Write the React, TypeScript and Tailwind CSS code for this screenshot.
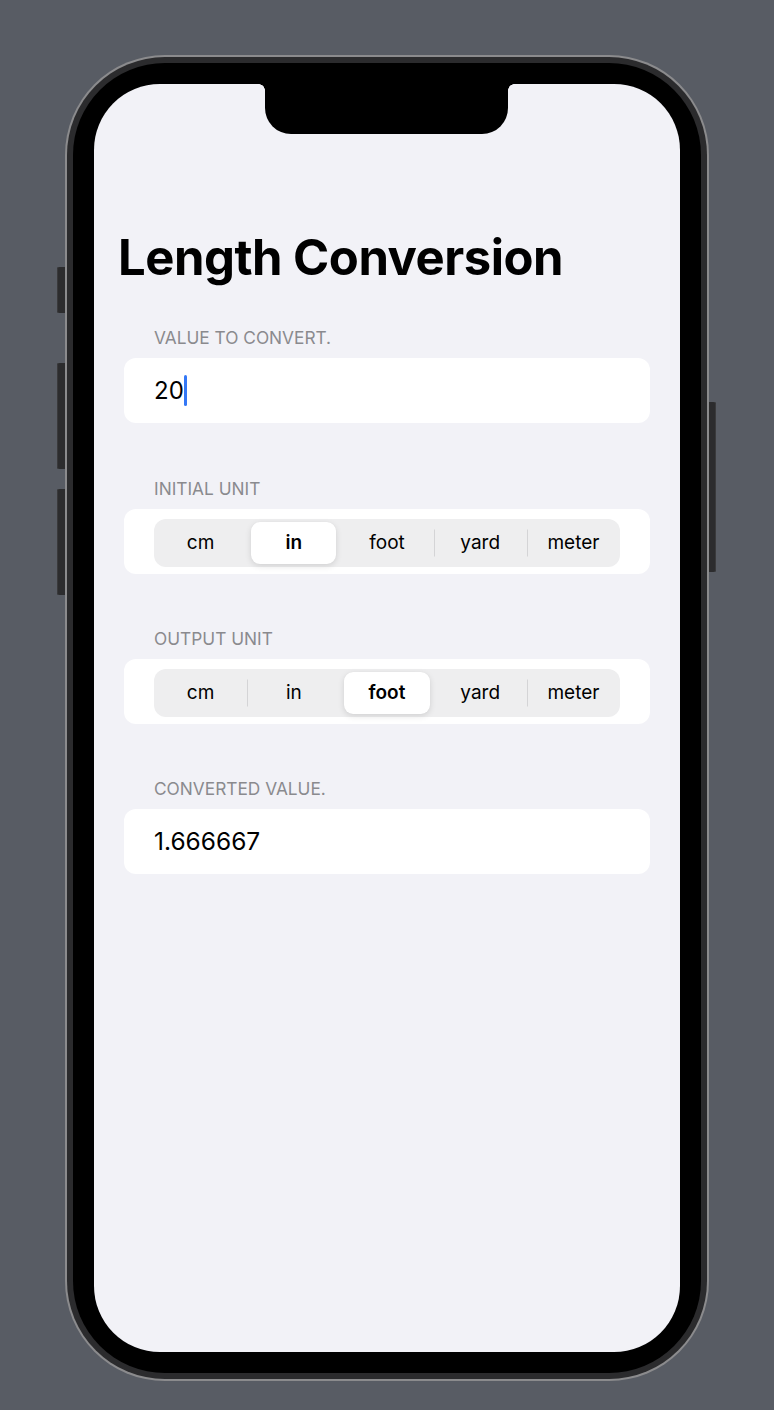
import React from "react";
import clsx from "clsx";

const units = ["cm", "in", "foot", "yard", "meter"];

const Label = ({ children }: { children: React.ReactNode }) => (
  <div className="pl-[30px] text-[17.3px] leading-[22px] uppercase text-[#8a8a8e]">{children}</div>
);

const Row = ({ children, className }: { children: React.ReactNode; className?: string }) => (
  <div className={clsx("mt-[9px] flex h-[65px] rounded-[12px] bg-white", className)}>{children}</div>
);

// iOS style segmented picker
const Segmented = ({ selected }: { selected: number }) => (
  <div className="flex h-[48px] w-full rounded-[12px] bg-[#eeeeef] py-[3px]">
    {units.map((u, i) => {
      const active = i === selected;
      const sep = i > 0 && i !== selected && i - 1 !== selected;
      return (
        <div key={u} className="relative flex flex-1">
          {sep && <span className="absolute left-0 top-1/2 h-[27px] w-px -translate-y-1/2 bg-[#d4d4d6]" />}
          <div
            className={clsx(
              "mx-[4px] flex flex-1 items-center justify-center rounded-[9px] text-[19px] text-black",
              active ? "bg-white font-semibold shadow-[0_2px_6px_rgba(0,0,0,0.12),0_0_1px_rgba(0,0,0,0.06)]" : "font-normal"
            )}
          >
            {u}
          </div>
        </div>
      );
    })}
  </div>
);

export default function App() {
  return (
    <div className="flex min-h-[1410px] w-[774px] justify-center bg-[#585c64] pt-[55px] font-['Inter','Liberation_Sans',sans-serif]">
      <div className="relative h-[1326px] w-[644px]">
        {/* hardware buttons */}
        <div className="absolute left-[-8px] top-[212px] h-[46px] w-[9px] rounded-l-[2px] bg-[#2c2c2e] shadow-[inset_1px_0_0_#3a3a3c]" />
        <div className="absolute left-[-8px] top-[308px] h-[106px] w-[9px] rounded-l-[2px] bg-[#2c2c2e] shadow-[inset_1px_0_0_#3a3a3c]" />
        <div className="absolute left-[-8px] top-[434px] h-[106px] w-[9px] rounded-l-[2px] bg-[#2c2c2e] shadow-[inset_1px_0_0_#3a3a3c]" />
        <div className="absolute right-[-7px] top-[347px] h-[170px] w-[9px] rounded-r-[2px] bg-[#2c2c2e] shadow-[inset_-1px_0_0_#3a3a3c]" />

        <div className="relative h-full w-full rounded-[100px] bg-[#8b8b8d] p-[2px]">
          <div className="h-full w-full rounded-[98px] bg-[#2b2b2d] p-[6px]">
            <div className="h-full w-full rounded-[92px] bg-black p-[21px]">
              <div className="relative h-full w-full overflow-hidden rounded-[66px] bg-[#f2f2f7]">
                {/* notch */}
                <div className="absolute left-[171px] top-0 h-[50px] w-[243px] rounded-b-[26px] bg-black" />
                <div className="absolute left-[165px] top-0 h-[6px] w-[6px] bg-[radial-gradient(circle_at_0_100%,#f2f2f7_5.5px,#000_6px)]" />
                <div className="absolute left-[414px] top-0 h-[6px] w-[6px] bg-[radial-gradient(circle_at_100%_100%,#f2f2f7_5.5px,#000_6px)]" />

                <div className="flex flex-col px-[30px] pt-[145px]">
                  <h1 className="-ml-[6px] text-[49px] font-bold leading-[58px] tracking-[-0.01em] text-black">
                    Length Conversion
                  </h1>

                  <div className="mt-[40px]">
                    <Label>Value to convert.</Label>
                    <Row className="items-center px-[30px]">
                      <span className="text-[24px] text-black">20</span>
                      <span className="h-[31px] w-[3px] rounded-full bg-[#3478f6]" />
                    </Row>
                  </div>

                  <div className="mt-[55px]">
                    <Label>Initial unit</Label>
                    <Row className="px-[30px] pb-[7px] pt-[10px]">
                      <Segmented selected={1} />
                    </Row>
                  </div>

                  <div className="mt-[54px]">
                    <Label>Output unit</Label>
                    <Row className="px-[30px] pb-[7px] pt-[10px]">
                      <Segmented selected={2} />
                    </Row>
                  </div>

                  <div className="mt-[54px]">
                    <Label>Converted value.</Label>
                    <Row className="items-center px-[30px]">
                      <span className="text-[24.5px] text-black">1.666667</span>
                    </Row>
                  </div>
                </div>
              </div>
            </div>
          </div>
        </div>
      </div>
    </div>
  );
}
